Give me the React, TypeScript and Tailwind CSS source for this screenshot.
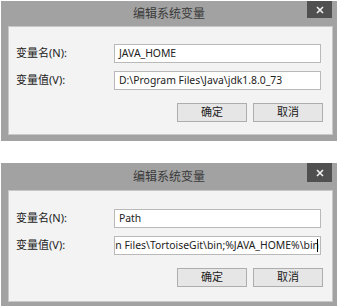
import React from "react";

const font = { fontFamily: '"Noto Sans", "Noto Sans CJK SC", sans-serif' };

function Dialog({
  name,
  value,
  scrolled,
  tall,
}: {
  name: string;
  value: string;
  scrolled?: boolean;
  tall?: boolean;
}) {
  return (
    <div className="w-[336px] bg-[#a2a2a2] flex flex-col" style={font}>
      <div className={"relative flex items-center justify-center " + (tall ? "h-[27px]" : "h-[25px]")}>
        <span className="text-[12px] text-[#3a3a3a]">编辑系统变量</span>
        <div className={"absolute right-[5px] top-0 w-[25px] bg-[#505050] flex items-center justify-center " + (tall ? "h-[19px]" : "h-[17px]")}>
          <svg width="8" height="8" viewBox="0 0 8 8">
            <path d="M1 1 L7 7 M7 1 L1 7" stroke="#f2f2f2" strokeWidth="1.6" />
          </svg>
        </div>
      </div>
      <div
        className={
          "ml-[7px] mr-[4px] bg-[#f3f3f3] border border-[#c8c8c8] pl-[7px] pr-[9px] flex flex-col gap-[8px] " +
          (tall ? "pt-[18px] pb-[14px] mb-[4px]" : "pt-[17px] pb-[12px] mb-[6px]")
        }
      >
        <div className="flex items-center">
          <div className="w-[98px] text-[11px] text-[#222]">变量名(N):</div>
          <div className="w-[207px] h-[19px] bg-white border border-[#b9b9b9] flex items-center px-[4px] text-[10.4px] text-[#222]">
            {name}
          </div>
        </div>
        <div className="flex items-center">
          <div className="w-[98px] text-[11px] text-[#222]">变量值(V):</div>
          <div
            className={
              "w-[207px] h-[19px] bg-white border border-[#b9b9b9] flex items-center overflow-hidden whitespace-nowrap text-[10.4px] text-[#222] " +
              (scrolled ? "justify-end pr-[2px]" : "px-[4px]")
            }
          >
            <span className="shrink-0">{value}</span>
            {scrolled && <span className="shrink-0 w-px h-[13px] bg-black -ml-[2px]" />}
          </div>
        </div>
        <div className="flex justify-end gap-[6px] mt-[5px]">
          <div className="w-[70px] h-[19px] bg-[#e6e6e6] border border-[#adadad] flex items-center justify-center text-[11px] text-[#222]">
            确定
          </div>
          <div className="w-[70px] h-[19px] bg-[#e6e6e6] border border-[#adadad] flex items-center justify-center text-[11px] text-[#222]">
            取消
          </div>
        </div>
      </div>
    </div>
  );
}

export default function App() {
  return (
    <div className="w-[341px] h-[307px] bg-white pl-[1px] pt-[1px] flex flex-col gap-[22px]">
      <Dialog name="JAVA_HOME" value="D:\Program Files\Java\jdk1.8.0_73" />
      <Dialog
        name="Path"
        value="n Files\TortoiseGit\bin;%JAVA_HOME%\bin"
        scrolled
        tall
      />
    </div>
  );
}
